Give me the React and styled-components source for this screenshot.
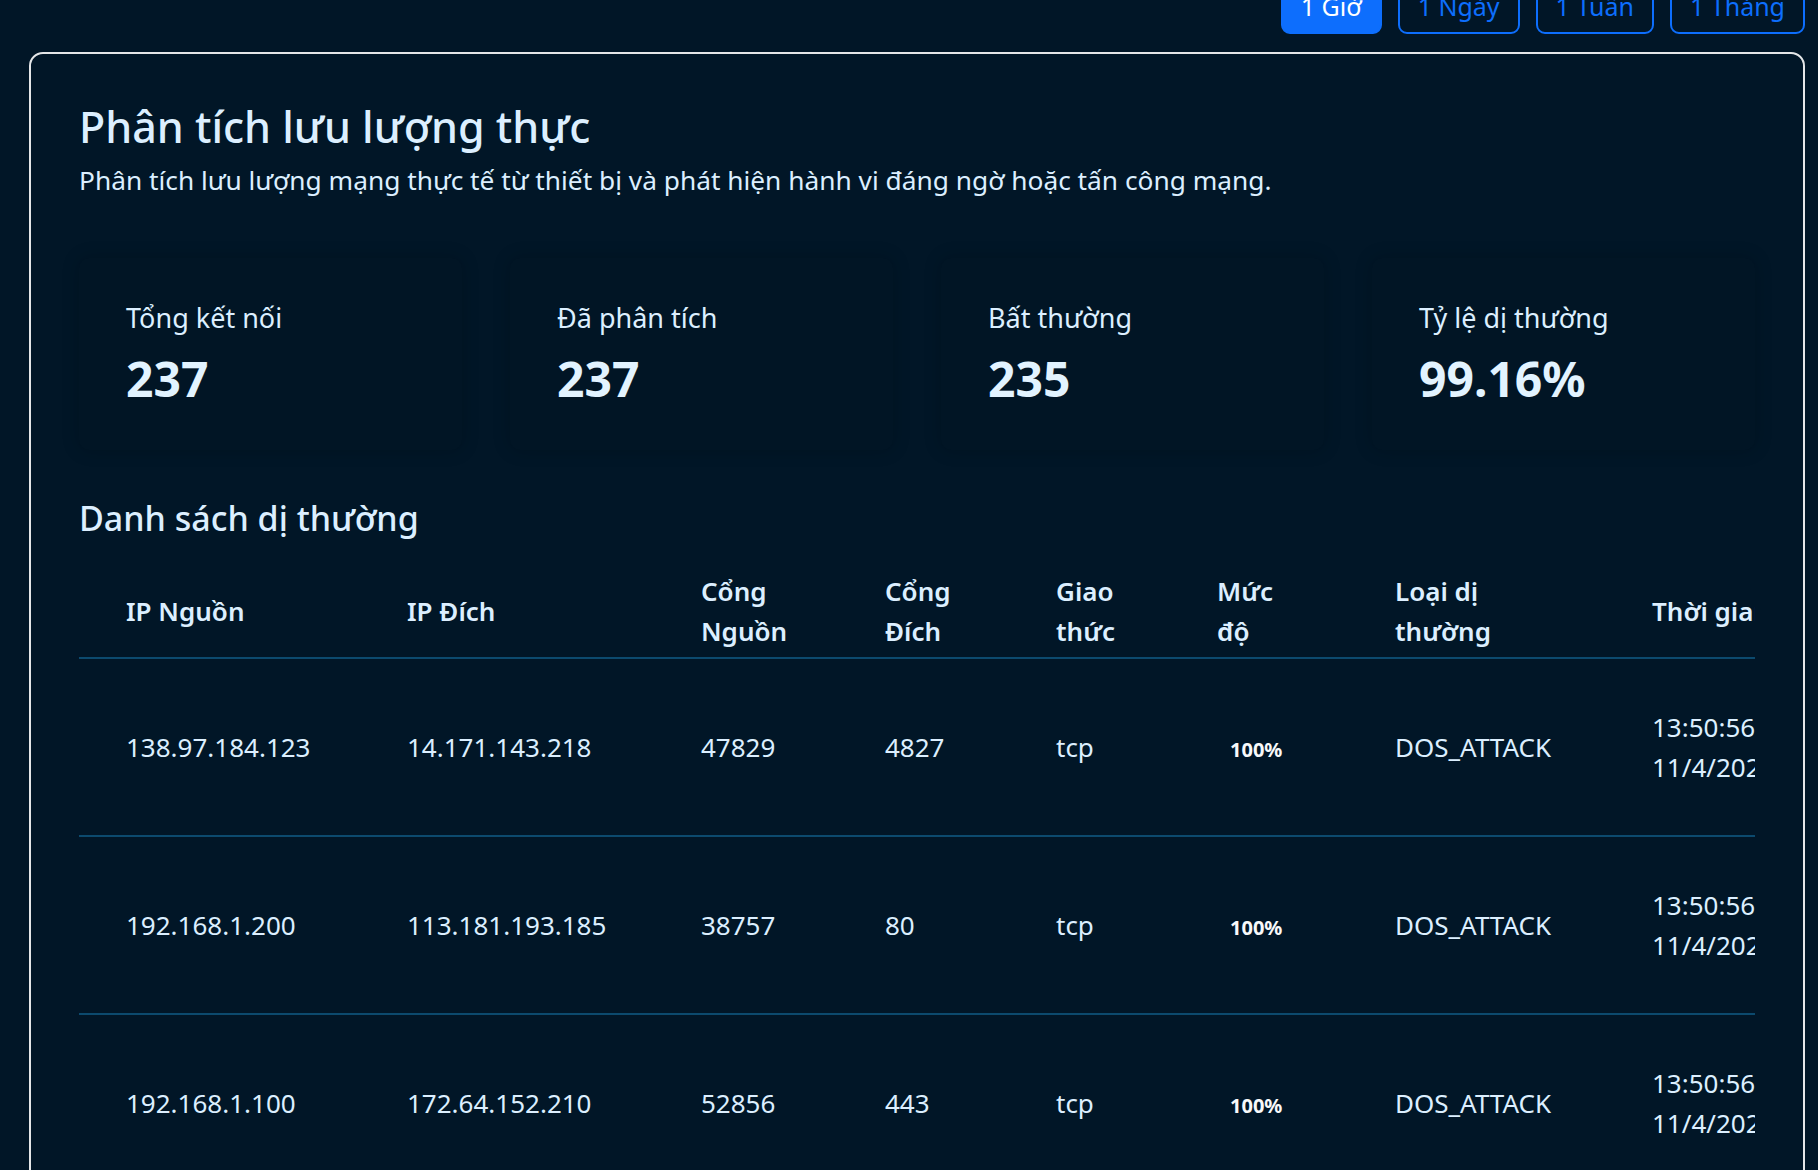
import React from "react"
import styled, { createGlobalStyle } from "styled-components"

const GlobalStyle = createGlobalStyle`
  html, body {
    margin: 0;
    padding: 0;
    background: #011627;
    overflow: hidden;
  }
  body {
    font-family: "Noto Sans", "Open Sans", sans-serif;
    color: #dcefff;
  }
  * { box-sizing: border-box; }
`

const ranges = ["1 Giờ", "1 Ngày", "1 Tuần", "1 Tháng"]

const stats = [
  { label: "Tổng kết nối", value: "237" },
  { label: "Đã phân tích", value: "237" },
  { label: "Bất thường", value: "235" },
  { label: "Tỷ lệ dị thường", value: "99.16%" },
]

const columns = [
  { title: "IP Nguồn", width: 281 },
  { title: "IP Đích", width: 294 },
  { title: "Cổng Nguồn", width: 184 },
  { title: "Cổng Đích", width: 171 },
  { title: "Giao thức", width: 161 },
  { title: "Mức độ", width: 178 },
  { title: "Loại dị thường", width: 257 },
  { title: "Thời gian", width: 220 },
]

const rows = [
  ["138.97.184.123", "14.171.143.218", "47829", "4827", "tcp"],
  ["192.168.1.200", "113.181.193.185", "38757", "80", "tcp"],
  ["192.168.1.100", "172.64.152.210", "52856", "443", "tcp"],
  ["10.0.0.15", "104.21.33.7", "51022", "443", "tcp"],
]

function App() {
  return (
    <Page>
      <GlobalStyle />
      <RangeBar>
        {ranges.map((r, i) => (
          <RangeButton key={r} active={i === 0}>{r}</RangeButton>
        ))}
      </RangeBar>

      <Panel>
        <Title>Phân tích lưu lượng thực</Title>
        <Subtitle>
          Phân tích lưu lượng mạng thực tế từ thiết bị và phát hiện hành vi đáng ngờ hoặc tấn công mạng.
        </Subtitle>

        <StatGrid>
          {stats.map(s => (
            <StatCard key={s.label}>
              <StatLabel>{s.label}</StatLabel>
              <StatValue>{s.value}</StatValue>
            </StatCard>
          ))}
        </StatGrid>

        <SectionTitle>Danh sách dị thường</SectionTitle>

        <TableScroll>
          <Table>
            <colgroup>
              {columns.map(c => <col key={c.title} style={{ width: c.width }} />)}
            </colgroup>
            <thead>
              <tr>
                {columns.map(c => <Th key={c.title}>{c.title}</Th>)}
              </tr>
            </thead>
            <tbody>
              {rows.map((r, i) => (
                <tr key={i}>
                  {r.map((v, j) => <Td key={j}>{v}</Td>)}
                  <Td><Badge>100%</Badge></Td>
                  <Td>DOS_ATTACK</Td>
                  <Td>13:50:56 11/4/2025</Td>
                </tr>
              ))}
            </tbody>
          </Table>
        </TableScroll>
      </Panel>
    </Page>
  )
}

export default App

const Page = styled.div`
padding: 0 13px 0 29px;
`

const RangeBar = styled.div`
display: flex;
justify-content: flex-end;
gap: 16px;
margin-top: -23px;
margin-bottom: 18px;
`

const RangeButton = styled.div`
height: 57px;
padding: 0 18px;
display: flex;
align-items: center;
font-size: 25px;
border: 2px solid #0d6efd;
border-radius: 9px;
color: ${props => props.active ? "#ffffff" : "#0d6efd"};
background: ${props => props.active ? "#0d6efd" : "transparent"};
`

const Panel = styled.div`
border: 2px solid #e4e6e8;
border-radius: 14px;
padding: 47px 48px 0 48px;
min-height: 1300px;
`

const Title = styled.h2`
margin: 0 0 8px 0;
font-size: 43px;
font-weight: 500;
line-height: 1.2;
`

const Subtitle = styled.p`
margin: 0;
font-size: 26.3px;
line-height: 1.5;
`

const StatGrid = styled.div`
display: grid;
grid-template-columns: repeat(4, 1fr);
gap: 48px;
margin-top: 58px;
`

const StatCard = styled.div`
padding: 40px 47px;
border-radius: 10px;
background: #011525;
box-shadow: 0 0 18px rgba(0, 0, 0, 0.18);
`

const StatLabel = styled.div`
font-size: 27px;
line-height: 40px;
`

const StatValue = styled.div`
margin-top: 10px;
font-size: 48px;
font-weight: 700;
line-height: 62px;
color: #e2f3ff;
`

const SectionTitle = styled.h3`
margin: 47px 0 25px 0;
font-size: 34px;
font-weight: 500;
line-height: 43px;
`

const TableScroll = styled.div`
overflow: hidden;
`

const Table = styled.table`
width: 1746px;
table-layout: fixed;
border-collapse: collapse;
`

const Th = styled.th`
text-align: left;
vertical-align: middle;
padding: 6px 47px;
font-size: 26px;
font-weight: 600;
line-height: 40px;
border-bottom: 2px solid #0c4a6e;
`

const Td = styled.td`
vertical-align: middle;
padding: 48px 47px;
font-size: 26px;
line-height: 40px;
border-bottom: 2px solid #0c4a6e;
`

const Badge = styled.span`
display: inline-block;
padding: 0.35em 0.65em;
font-size: 20px;
font-weight: 700;
line-height: 1;
color: #f8f9fa;
`
